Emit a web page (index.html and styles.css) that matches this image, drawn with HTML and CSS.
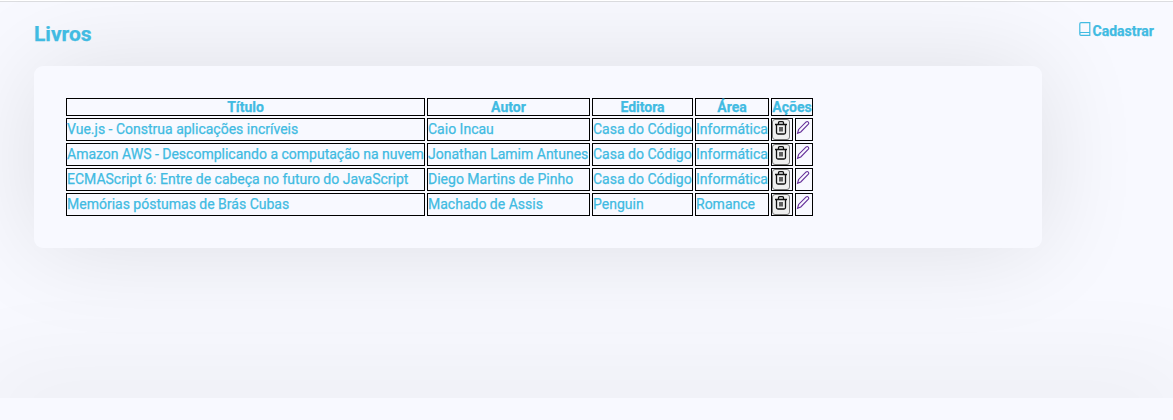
FILE: index.html
```html
<!DOCTYPE html>
<html lang="pt-BR">
<head>
<meta charset="utf-8">
<title>Livros</title>
<link rel="stylesheet" href="styles.css">
</head>
<body>
<svg class="sprite" aria-hidden="true">
  <symbol id="trash" viewBox="0 0 14 16"><path d="M1 4.500h12M4.500 4.200V2.700Q4.500 1.600 5.500 1.600h3Q9.500 1.600 9.500 2.700v1.500M2.500 4.700v7.800q0 1.500 1.500 1.500h6q1.500 0 1.500-1.500V4.700M6 7v4.500M8 7v4.500"/></symbol>
  <symbol id="pencil" viewBox="0 0 16 16"><path d="M1.600 14.200l1.200-4.100 8-8q1.200-1 2.300.1t.1 2.300l-8.100 8.200z"/></symbol>
</svg>
<main class="page">
  <header class="top">
    <h1 class="title">Livros</h1>
    <a class="register"><svg class="book" viewBox="0 0 12 14"><path d="M.8 12V2Q.8.700 2 .700h8.800v12.600H2Q.8 13.300.8 12M.8 11.500Q1 10.500 2 10.500h8.800"/></svg>Cadastrar</a>
  </header>
  <section class="card">
    <table class="books">
      <colgroup><col class="c-title"><col class="c-author"><col class="c-publisher"><col class="c-area"><col class="c-delete"><col class="c-edit"></colgroup>
      <thead><tr><th>Título</th><th>Autor</th><th>Editora</th><th>Área</th><th colspan="2">Ações</th></tr></thead>
      <tbody>
        <tr><td>Vue.js - Construa aplicações incríveis</td><td>Caio Incau</td><td>Casa do Código</td><td>Informática</td><td class="action"><button class="delete"><svg class="trash"><use href="#trash"/></svg></button></td><td class="action"><svg class="pencil"><use href="#pencil"/></svg></td></tr>
        <tr><td>Amazon AWS - Descomplicando a computação na nuvem</td><td>Jonathan Lamim Antunes</td><td>Casa do Código</td><td>Informática</td><td class="action"><button class="delete"><svg class="trash"><use href="#trash"/></svg></button></td><td class="action"><svg class="pencil"><use href="#pencil"/></svg></td></tr>
        <tr><td>ECMAScript 6: Entre de cabeça no futuro do JavaScript</td><td>Diego Martins de Pinho</td><td>Casa do Código</td><td>Informática</td><td class="action"><button class="delete"><svg class="trash"><use href="#trash"/></svg></button></td><td class="action"><svg class="pencil"><use href="#pencil"/></svg></td></tr>
        <tr><td>Memórias póstumas de Brás Cubas</td><td>Machado de Assis</td><td>Penguin</td><td>Romance</td><td class="action"><button class="delete"><svg class="trash"><use href="#trash"/></svg></button></td><td class="action"><svg class="pencil"><use href="#pencil"/></svg></td></tr>
      </tbody>
    </table>
  </section>
</main>
<footer class="footer"></footer>
</body>
</html>
```
FILE: styles.css
```css
* { box-sizing: border-box; }
html { background: #f8f9ff; }
body { margin: 0; height: 420px; overflow: hidden; border-top: 1px solid #fff; background: #f8f9ff; color: #41bbe2; font: 14px/16px Roboto, sans-serif; -webkit-text-stroke: .25px currentColor; }
.sprite { display: none; }
.page { height: 397px; border-top: 1px solid #dcdde0; padding: 0 19px 0 34px; }
.top { height: 64px; display: flex; justify-content: space-between; align-items: flex-start; }
.title { margin: 20px 0 0; font-size: 21px; line-height: 24px; font-weight: 700; position: relative; z-index: 1; }
.register { display: flex; margin-top: 20px; font-weight: 700; line-height: 18px; position: relative; z-index: 1; }
.book { width: 12px; height: 14px; margin-right: 2px; fill: none; stroke: currentColor; stroke-width: 1.2; }
.card { width: 1008px; height: 182px; padding: 30px; border-radius: 9px; background: #f8f9ff; box-shadow: 0 0 100px rgba(0, 0, 0, .11); }
.books { width: 751px; table-layout: fixed; border-spacing: 2px; }
.c-title { width: 359px; }
.c-author { width: 163px; }
.c-publisher { width: 101px; }
.c-area { width: 74px; }
.c-delete { width: 22px; }
.c-edit { width: 18px; }
.books th, .books td { border: 1px solid #000; padding: 0; white-space: nowrap; }
.books th { height: 18px; font-weight: 700; }
.books td { height: 23px; padding-bottom: 2px; text-align: left; }
.books .action { padding: 0; }
.delete { display: block; width: 18px; height: 21px; padding: 0 1px 3px; border: 1px solid #777; border-radius: 3px; background: #efefef; color: #111; }
.trash { display: block; width: 14px; height: 16px; fill: none; stroke: currentColor; stroke-width: 1.3; }
.pencil { display: block; width: 15px; height: 15px; margin-top: -4px; fill: none; stroke: #65309a; stroke-width: 1.2; }
.footer { height: 22px; background: #f8f9ff; box-shadow: 0 0 100px 25px rgba(0, 0, 0, .06); }
```
